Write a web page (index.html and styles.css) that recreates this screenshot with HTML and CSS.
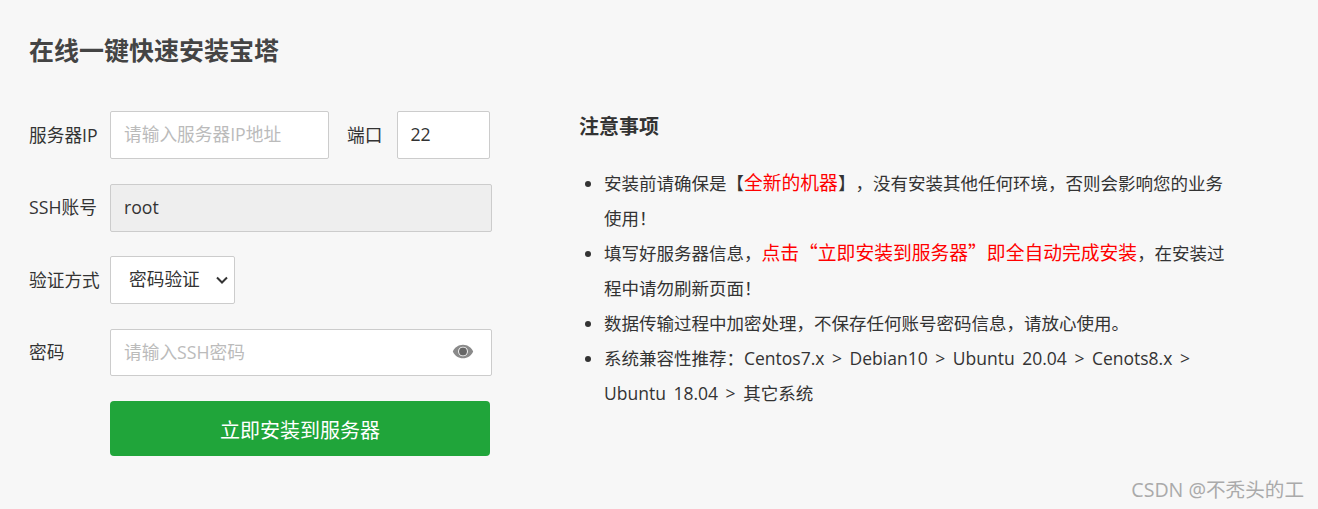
FILE: index.html
```html
<!DOCTYPE html>
<html lang="zh-CN">

<head>
    <meta charset="UTF-8">
    <meta name="viewport" content="width=device-width, initial-scale=1.0">
    <title>在线一键快速安装宝塔</title>
    <link rel="stylesheet" href="styles.css">
</head>

<body>
    <main class="page">
        <h1 class="title">在线一键快速安装宝塔</h1>
        <div class="columns">
            <form class="install-form">
                <div class="row">
                    <label class="row-label">服务器IP</label>
                    <input class="field field-ip" type="text" placeholder="请输入服务器IP地址">
                    <label class="port-label">端口</label>
                    <input class="field field-port" type="text" value="22">
                </div>
                <div class="row">
                    <label class="row-label">SSH账号</label>
                    <input class="field field-wide field-disabled" type="text" value="root" readonly>
                </div>
                <div class="row">
                    <label class="row-label">验证方式</label>
                    <select class="field field-select">
                        <option>密码验证</option>
                        <option>私钥验证</option>
                    </select>
                </div>
                <div class="row">
                    <label class="row-label">密码</label>
                    <div class="password-wrap">
                        <input class="field field-wide field-password" type="password" placeholder="请输入SSH密码">
                        <svg class="eye" viewBox="0 0 24 16" width="22" height="15">
                            <path fill-rule="evenodd" fill="#8a8a8a" d="M12 .6C7 .6 2.800 3.600.9 8c1.900 4.400 6.100 7.400 11.100 7.400S21.200 12.400 23.100 8C21.200 3.600 17 .6 12 .6zM12 13.300A5.300 5.300 0 1 1 12 2.700a5.300 5.300 0 0 1 0 10.600z" />
                            <circle cx="12" cy="8" r="4.300" fill="#666" />
                        </svg>
                    </div>
                </div>
                <div class="row row-submit">
                    <button class="submit" type="button">立即安装到服务器</button>
                </div>
            </form>

            <section class="notes">
                <h2 class="notes-title">注意事项</h2>
                <ul class="notes-list">
                    <li>安装前请确保是【<span class="red">全新的机器</span>】，没有安装其他任何环境，否则会影响您的业务使用！</li>
                    <li>填写好服务器信息，<span class="red">点击“立即安装到服务器”即全自动完成安装</span>，在安装过程中请勿刷新页面！</li>
                    <li>数据传输过程中加密处理，不保存任何账号密码信息，请放心使用。</li>
                    <li>系统兼容性推荐：<span class="versions">Centos7.x &gt; Debian10 &gt; Ubuntu 20.04 &gt; Cenots8.x &gt; Ubuntu 18.04 &gt; 其它系统</span></li>
                </ul>
            </section>
        </div>
    </main>
    <div class="watermark">CSDN @不秃头的工</div>
</body>

</html>
```

FILE: styles.css
```css
* {
    box-sizing: border-box;
}

html,
body {
    height: 100%;
}

body {
    margin: 0;
    overflow: hidden;
    position: relative;
    background: #f7f7f7;
    color: #333;
    font-family: "Open Sans", "Noto Sans CJK SC", sans-serif;
    font-size: 17.7px;
    text-spacing-trim: space-all;
}

.page {
    padding: 33px 29px 0;
}

.title {
    margin: 0;
    height: 78px;
    font-size: 25px;
    line-height: 35px;
    font-weight: 700;
    color: #444;
}

.columns {
    display: flex;
}

.install-form {
    width: 463px;
}

.row {
    display: flex;
    align-items: center;
    margin-bottom: 24.7px;
}

.row-label {
    width: 81px;
    flex: none;
    padding-bottom: 3px;
    white-space: nowrap;
}

.port-label {
    margin: 0 14px 0 18px;
    padding-bottom: 2px;
    white-space: nowrap;
}

.field {
    height: 48px;
    padding: 0 13px 2px;
    border: 1px solid #ccc;
    border-radius: 2px;
    background: #fff;
    color: #333;
    font-family: inherit;
    font-size: 17.7px;
    outline: none;
}

.field::placeholder {
    color: #bbb;
}

.field-ip {
    width: 219px;
}

.field-port {
    width: 93px;
    margin-left: 1px;
    padding: 0 12px 2px;
}

.field-wide {
    width: 382px;
}

.field-disabled {
    background: #eee;
}

.field-select {
    width: 125px;
    padding: 0 0 2px 18px;
    appearance: none;
    background: #fff url("data:image/svg+xml,%3Csvg xmlns='http://www.w3.org/2000/svg' width='12' height='8'%3E%3Cpath d='M1 1.500l5 5 5-5' fill='none' stroke='%23333' stroke-width='2'/%3E%3C/svg%3E") no-repeat right 6px center;
}

.password-wrap {
    position: relative;
}

.field-password {
    display: block;
    height: 47px;
}

.eye {
    position: absolute;
    right: 18px;
    top: 15px;
}

.row-submit {
    padding-left: 81px;
    margin-bottom: 0;
}

.submit {
    width: 380px;
    height: 55px;
    padding: 2px 0 0;
    border: 0;
    border-radius: 4px;
    background: #20a53a;
    color: #fff;
    font-family: inherit;
    font-size: 20px;
}

.notes {
    margin-left: 87px;
    padding-top: 1px;
    width: 650px;
}

.notes-title {
    margin: 0 0 24px;
    font-size: 20px;
    line-height: 30px;
    font-weight: 700;
    color: #333;
}

.notes-list {
    margin: 0;
    padding: 0 0 0 25px;
    font-size: 17.5px;
    line-height: 35px;
}

.red {
    color: #f00;
    font-family: "Noto Sans CJK SC", sans-serif;
    font-size: 18.8px;
    line-height: 1;
}

.versions {
    word-spacing: 3px;
}

.watermark {
    position: absolute;
    right: 14px;
    bottom: 6px;
    color: #aaa;
    font-size: 19.6px;
    line-height: 26px;
}
```
